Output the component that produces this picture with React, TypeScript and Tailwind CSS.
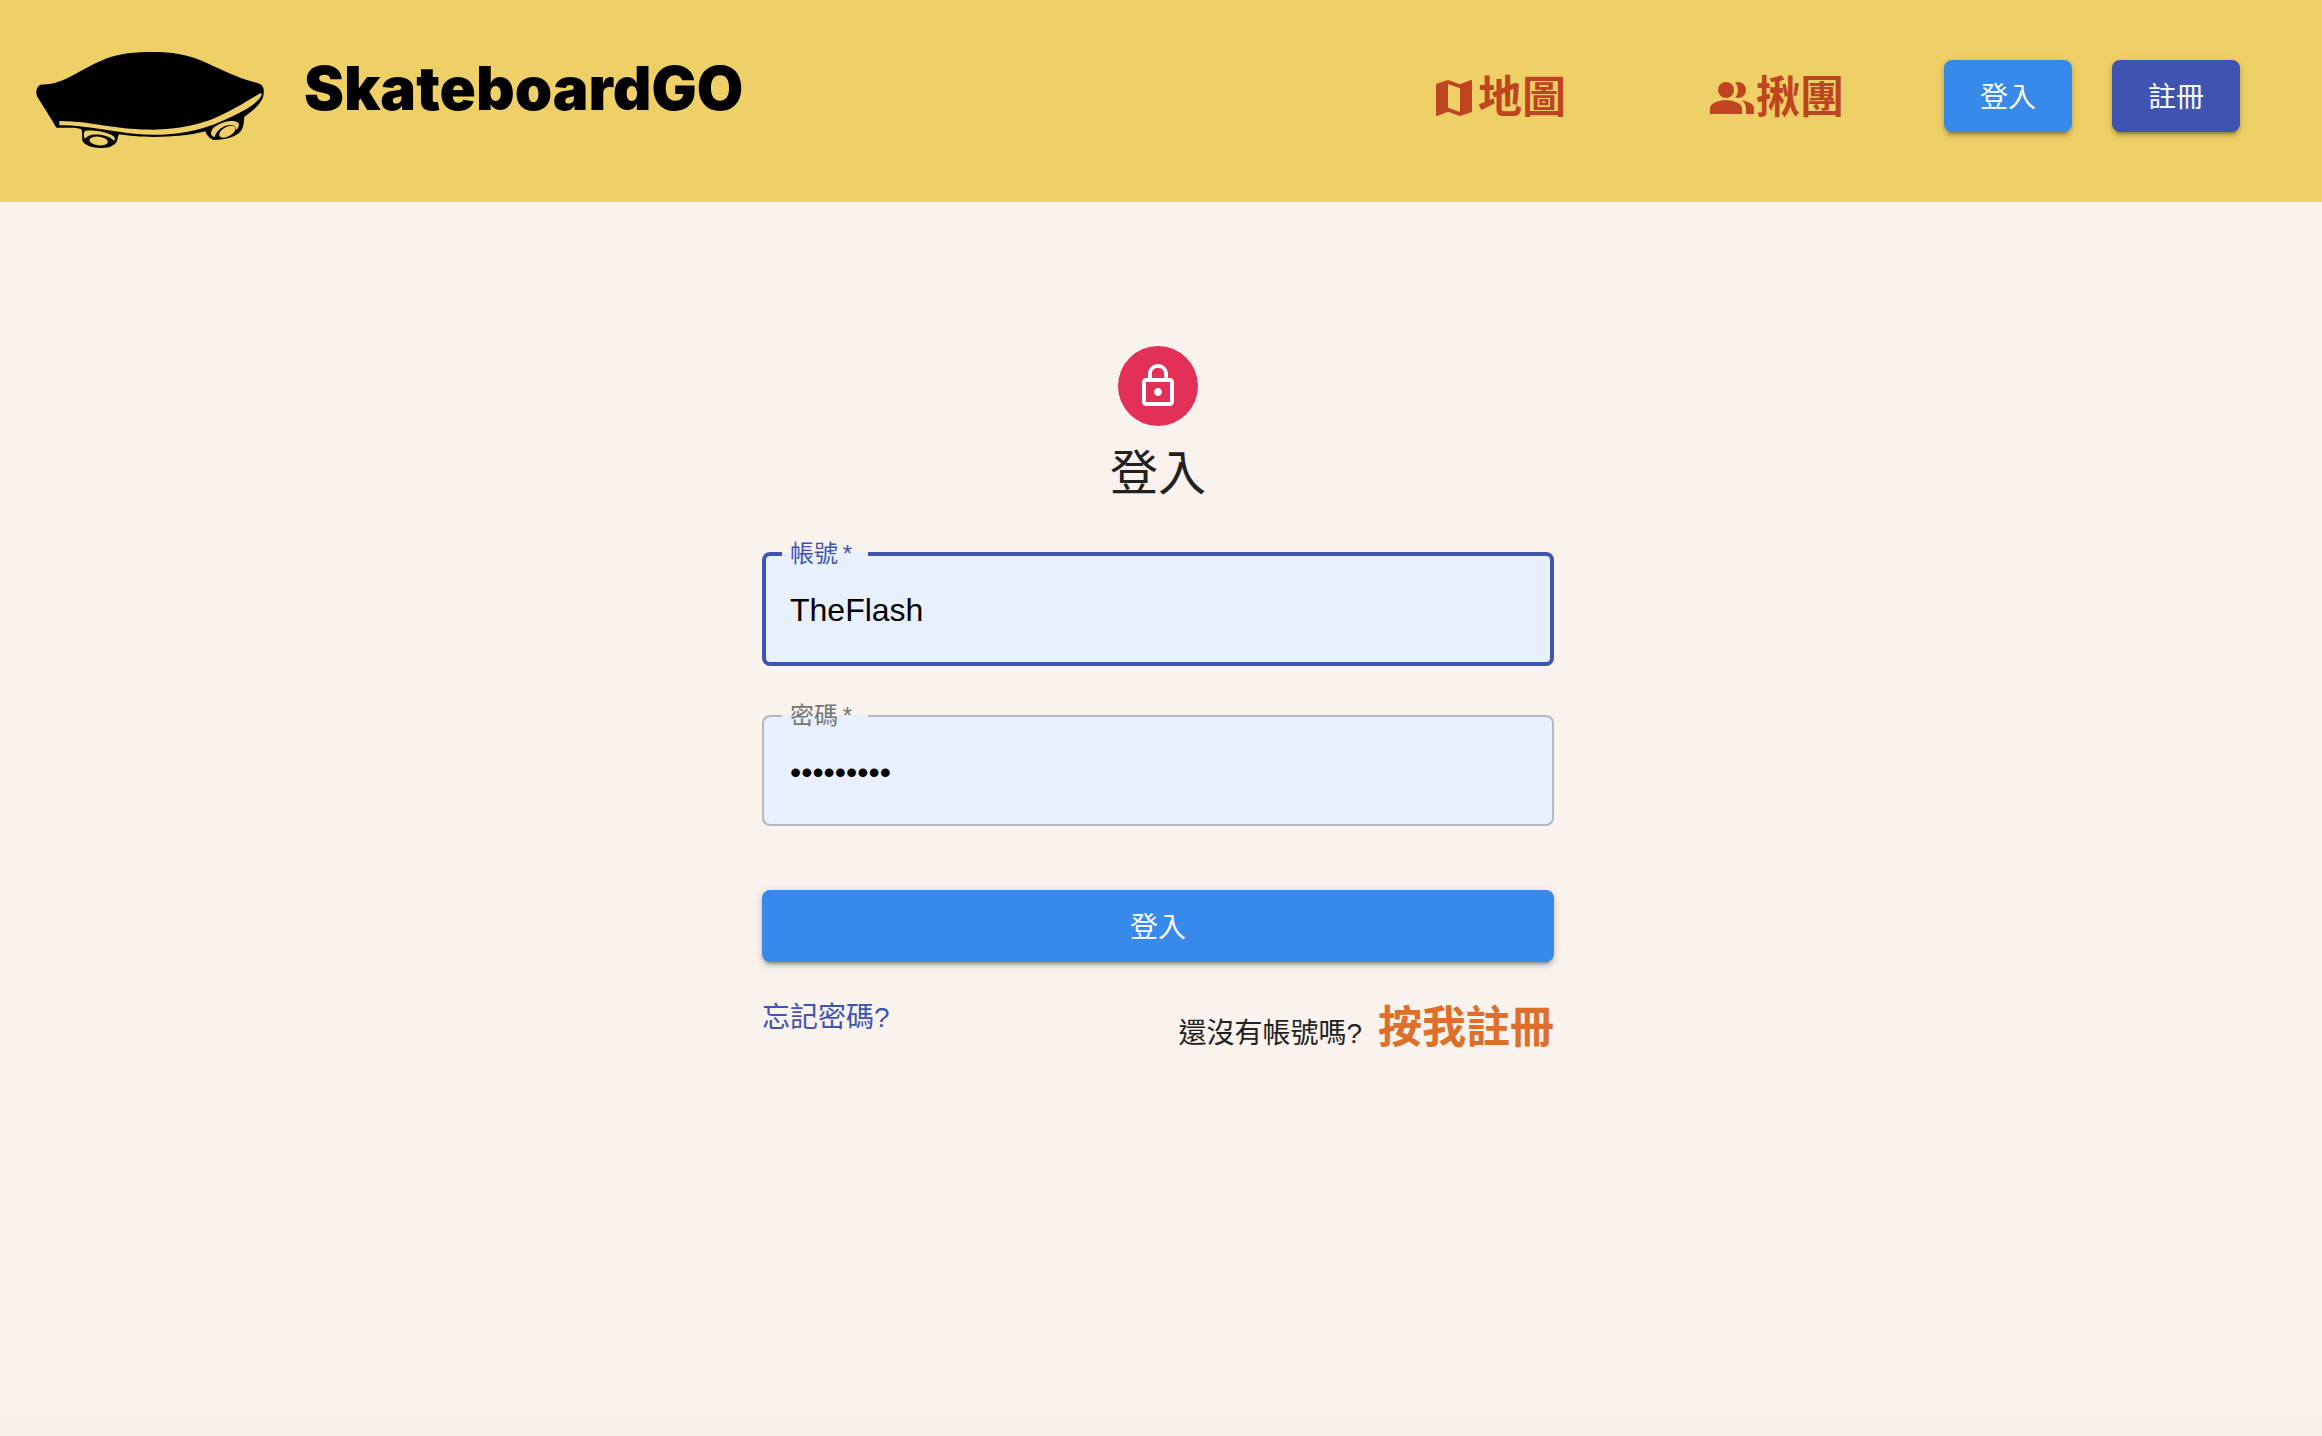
import React from "react";
import { MdLockOutline, MdMap, MdPeopleAlt } from "react-icons/md";

function SkateboardLogo() {
  return (
    <svg viewBox="48 36 684 288" className="h-24 w-57 shrink-0" aria-hidden="true">
      <path d="M60 134 C92 133 112 128 138 116 C175 99 215 73 255 57 C300 40 345 36 400 36 C455 36 500 43 545 62 C590 82 640 106 680 120 C704 128 718 128 727 138 C733 146 732 160 729 172 C722 190 708 206 673 230 C672 250 670 262 662 274 C648 290 622 299 580 300 C566 294 560 284 556 274 C515 285 460 291 400 291 C360 291 325 287 297 283 C293 291 294 299 288 308 C278 320 262 324 240 324 C212 323 196 316 188 304 C184 294 189 282 184 268 C174 263 164 263 150 263 L110 263 C106 260 104 254 101 249 L52 170 C47 160 47 144 60 134 Z" />
      <g fill="#efd067">
        <path d="M118 243 C170 244 215 250 262 258 C310 265 350 269 400 269 C480 267 535 254 585 234 C640 210 680 184 722 159 C726 161 726 165 723 169 C706 197 660 217 628 233 C565 263 500 284 400 284 C320 283 260 267 190 260 C165 257 140 256 118 256 Z" />
        <path d="M196 272 C222 269 262 276 280 288 C286 294 286 299 281 302 C269 288 244 281 216 284 C205 286 199 292 194 296 C191 288 190 278 196 272 Z" />
        <ellipse cx="236" cy="303" rx="28" ry="13" transform="rotate(7 236 303)" />
        <path d="M573 277 C576 262 600 246 632 243 C646 242 656 246 657 253 C657 260 653 267 649 270 C648 256 636 252 618 257 C600 263 587 277 584 292 C575 289 572 284 573 277 Z" />
        <ellipse cx="622" cy="275" rx="27" ry="14" transform="rotate(-29 622 275)" />
      </g>
    </svg>
  );
}

function NavLink({ icon, children }: { icon: React.ReactNode; children: React.ReactNode }) {
  return (
    <a href="#" className="flex items-center text-[44px] leading-12 font-bold text-[#bf4520]">
      {icon}
      {children}
    </a>
  );
}

const raised =
  "h-18 rounded-lg pt-1 text-[28px] text-white shadow-[0_6px_2px_-4px_rgba(0,0,0,0.2),0_4px_4px_0_rgba(0,0,0,0.14),0_2px_10px_0_rgba(0,0,0,0.12)]";

function Header() {
  return (
    <header className="flex h-[202px] items-start bg-[#efd067] pr-[82px] pl-9">
      <a href="#" className="mt-13 flex items-start gap-10 text-black">
        <SkateboardLogo />
        <span className="font-['Inter',sans-serif] text-[60px] leading-18 font-black">SkateboardGO</span>
      </a>
      <div className="mt-15 ml-auto flex h-18 items-center">
        <nav className="mt-1 mr-25 flex items-center gap-[142px]">
          <NavLink icon={<MdMap className="size-12" />}>地圖</NavLink>
          <NavLink icon={<MdPeopleAlt className="size-12" />}>揪團</NavLink>
        </nav>
        <div className="flex gap-10">
          <button type="button" className={`${raised} w-32 bg-[#388aea]`}>登入</button>
          <button type="button" className={`${raised} w-32 bg-[#3f54b0]`}>註冊</button>
        </div>
      </div>
    </header>
  );
}

type FieldProps = {
  id: string;
  label: string;
  type: string;
  value: string;
  frame: string;
  labelColor: string;
};

function Field({ id, label, type, value, frame, labelColor }: FieldProps) {
  return (
    <fieldset className={`w-full rounded-lg bg-[#e8f0fe] ${frame}`}>
      <legend className={`ml-4 pr-4 pl-2 text-2xl leading-6 ${labelColor}`}>
        <label htmlFor={id}>{label}{"\u2009"}*</label>
      </legend>
      <input
        id={id}
        type={type}
        defaultValue={value}
        required
        className="h-24 w-full bg-transparent px-6 pb-2 font-['Liberation_Sans',sans-serif] text-[32px] text-black outline-none"
      />
    </fieldset>
  );
}

export default function App() {
  return (
    <div className="flex min-h-screen flex-col bg-[#faf2ec] font-['Liberation_Sans','Noto_Sans_CJK_TC',sans-serif] text-[#212121]">
      <Header />
      <div className="flex flex-1 justify-center pr-1.5">
        <main className="flex w-full max-w-[792px] flex-col items-center pt-36">
          <div className="flex size-20 items-center justify-center rounded-full bg-[#e33059] text-white">
            <MdLockOutline className="size-12" />
          </div>
          <h1 className="mt-4 text-5xl leading-16">登入</h1>
          <form className="mt-9 flex w-full flex-col" onSubmit={(e) => e.preventDefault()}>
            <div className="flex flex-col gap-[38px]">
              <Field id="account" label="帳號" type="text" value="TheFlash" frame="border-4 border-[#3f54b0]" labelColor="text-[#3f54b0]" />
              <Field id="password" label="密碼" type="password" value="starlabs1" frame="border-2 border-[#b2b8c5] px-0.5" labelColor="text-[#757575]" />
            </div>
            <button type="submit" className={`${raised} mt-16 w-full bg-[#388aea]`}>登入</button>
            <div className="mt-9 flex items-start justify-between text-[28px] leading-10">
              <a href="#" className="text-[#3f54b0]">忘記密碼?</a>
              <p className="flex items-baseline gap-4">
                還沒有帳號嗎?
                <a href="#" className="text-[44px] leading-15 font-bold text-[#dd6f2a]">按我註冊</a>
              </p>
            </div>
          </form>
        </main>
      </div>
      <footer className="h-10 bg-linear-to-b from-[#faf2ec] to-[#f7eee9]" />
    </div>
  );
}
